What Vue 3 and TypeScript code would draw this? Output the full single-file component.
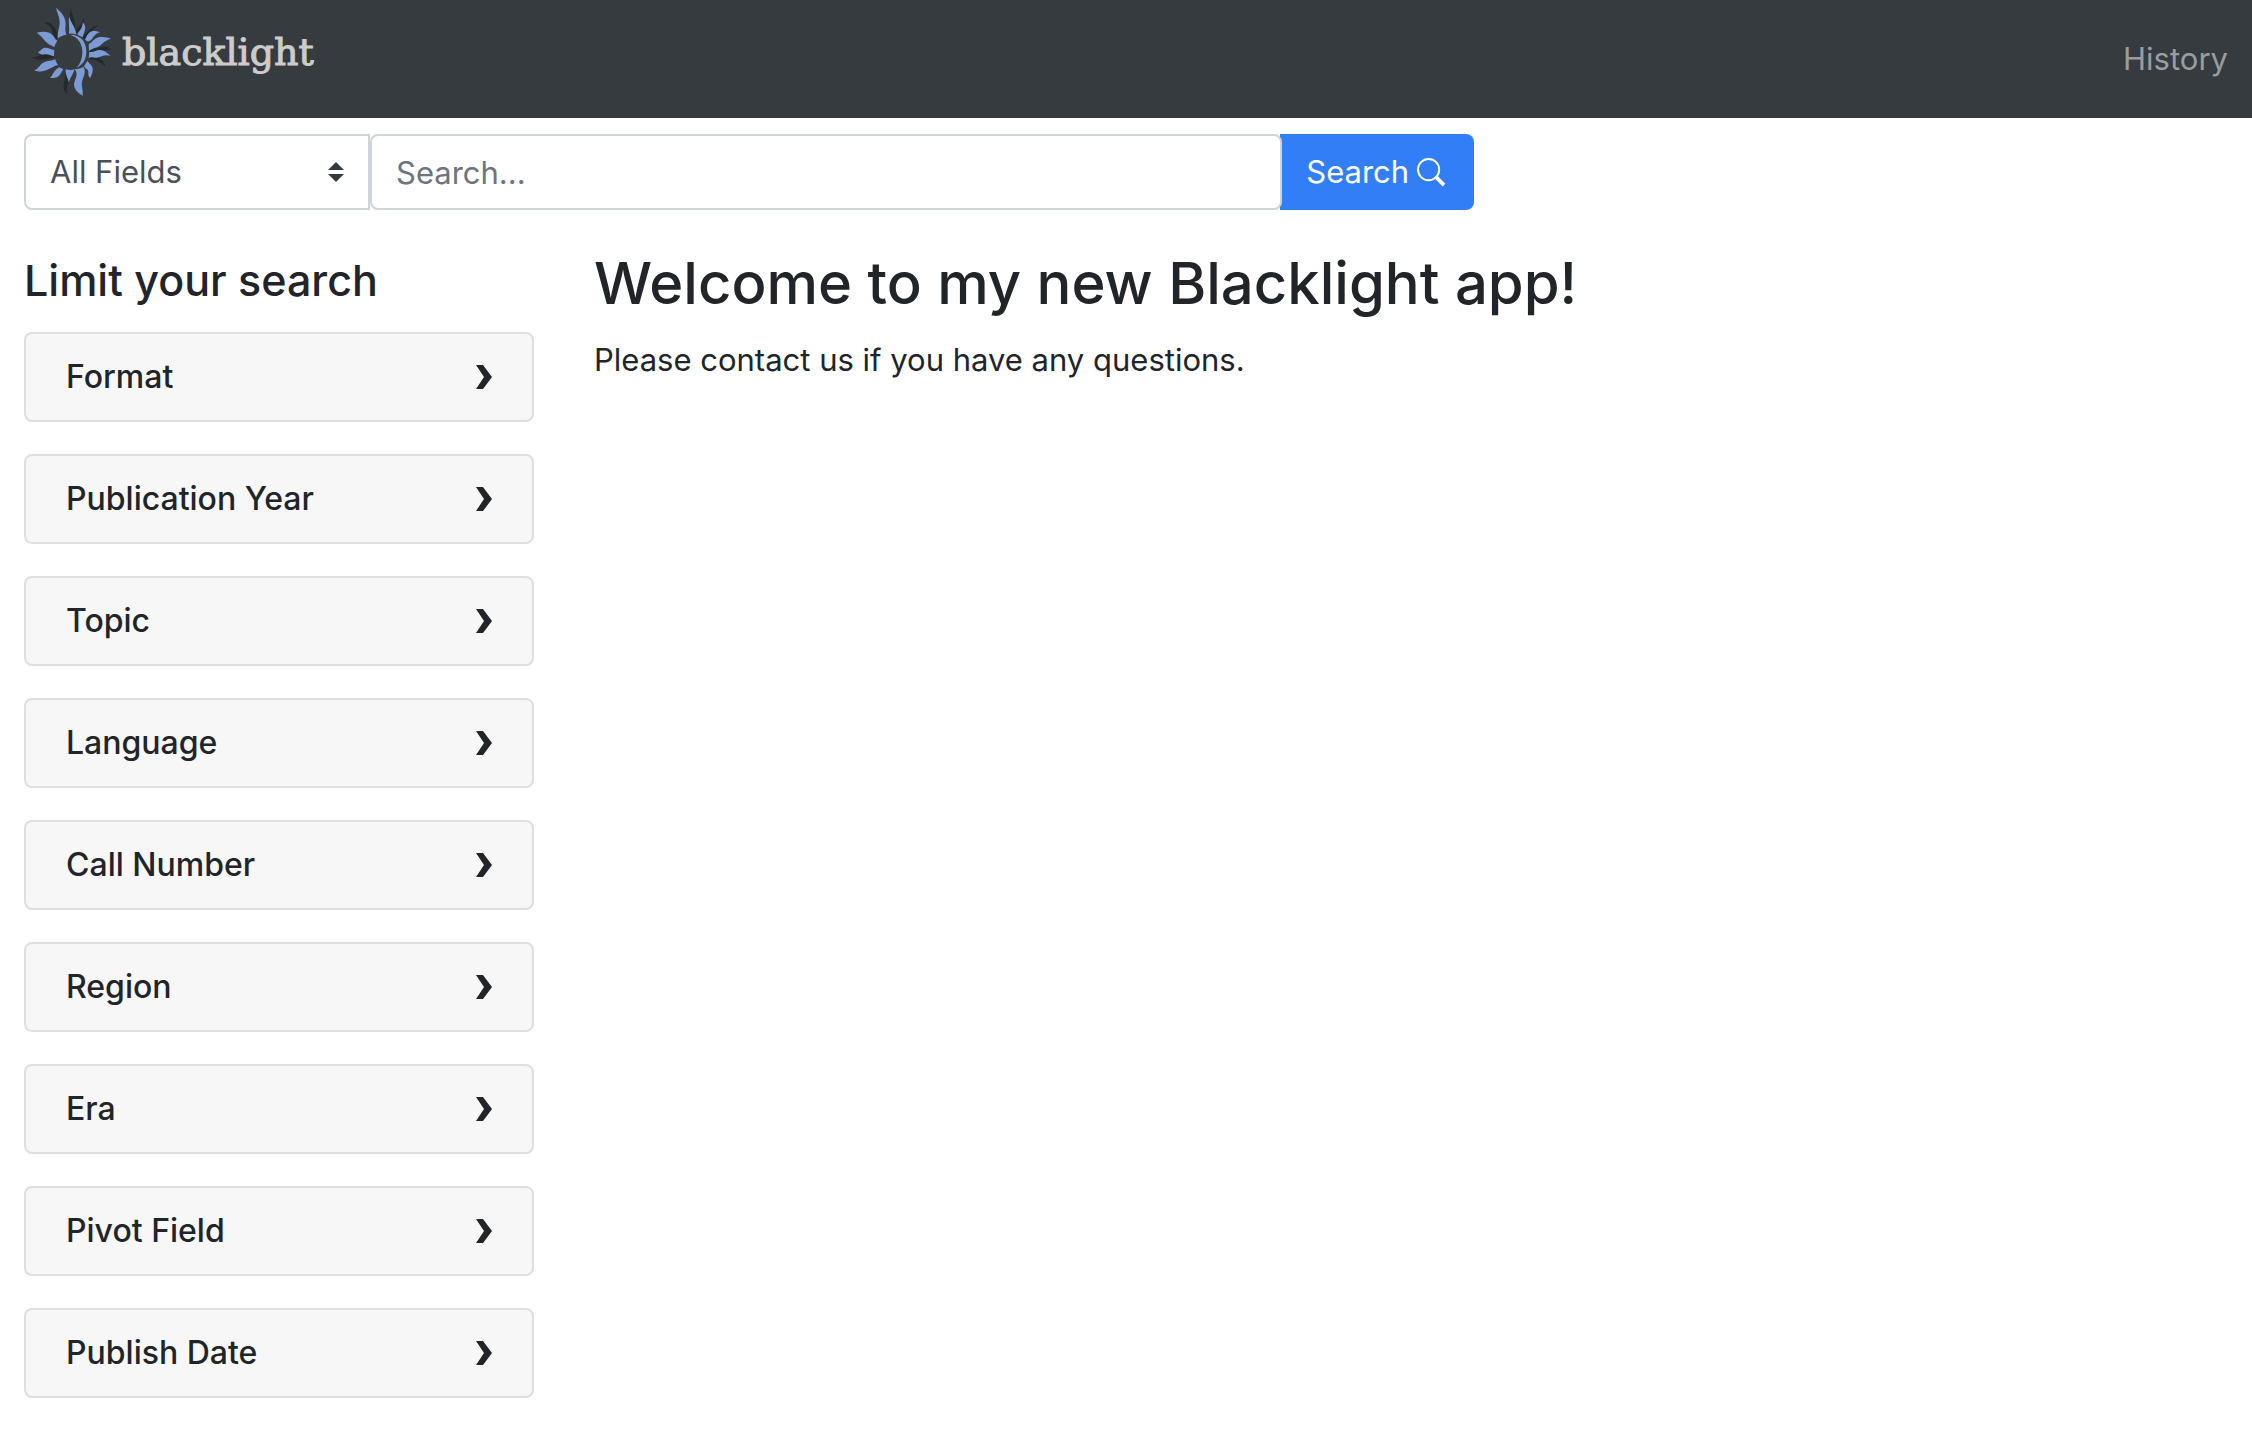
<script setup lang="ts">
import { ref } from 'vue'

const facets: string[] = [
  'Format',
  'Publication Year',
  'Topic',
  'Language',
  'Call Number',
  'Region',
  'Era',
  'Pivot Field',
  'Publish Date',
]

const query = ref('')
const field = ref('all_fields')
</script>

<template>
  <div class="page">
    <header class="navbar">
      <a class="brand" href="#" aria-label="blacklight">
        <svg class="sun" viewBox="0 0 300 330" aria-hidden="true">
          <g fill="#24292c">
            <path d="M152 15C150 40 170 58 166 96L148 80C142 55 154 40 152 15Z" />
            <path d="M190 54C196 70 176 88 178 100L164 98C170 82 186 76 190 54Z" />
            <path d="M72 68C98 62 104 86 116 104L110 118C94 100 98 76 72 68Z" />
            <path d="M236 76C212 80 204 98 186 110L198 120C210 100 216 88 236 76Z" />
            <path d="M32 170C50 178 60 158 90 164L104 172C80 178 56 186 32 170Z" />
            <path d="M276 148C256 132 240 142 208 150L210 160C236 158 250 150 276 148Z" />
            <path d="M258 199C246 178 236 168 210 166L206 178C230 176 240 190 258 199Z" />
            <path d="M142 284C120 262 138 244 134 222L152 228C152 248 134 258 142 284Z" />
            <path d="M66 186C76 200 90 190 108 184L112 194C96 200 76 210 66 186Z" />
          </g>
          <g fill="#7c9ad3">
            <path d="M108 23C132 42 140 62 136 84C135 92 138 98 139 104C130 105 121 109 114 115C110 98 120 82 119 65C118 48 112 40 108 23Z" />
            <path d="M147 49C153 70 166 80 169 103C162 101 154 100 147 101C149 84 145 68 147 49Z" />
            <path d="M188 67C204 84 190 98 189 110C184 112 178 108 172 103C177 92 188 88 188 67Z" />
            <path d="M241 97C222 100 220 118 209 123C203 126 199 124 195 118C199 113 203 97 216 94C226 92 234 95 241 97Z" />
            <path d="M273 116C250 122 246 136 231 142C221 146 214 147 207 153L206 132C216 130 220 116 236 112C250 109 262 112 273 116Z" />
            <path d="M271 167C252 162 246 170 230 173C220 174 214 168 206 175L208 156C220 158 228 150 240 150C254 151 260 158 271 167Z" />
            <path d="M210 234C200 224 210 212 200 207C196 204 194 203 192 199L202 183C207 190 216 194 218 206C219 217 215 226 210 234Z" />
            <path d="M188 287C168 276 158 262 164 244C169 230 174 220 164 208C174 207 184 204 191 201C198 216 192 228 187 241C182 258 190 266 188 287Z" />
            <path d="M147 248C144 236 136 224 137 208C146 210 154 211 163 208C160 224 150 232 147 248Z" />
            <path d="M90 234C100 226 100 210 119 202C123 205 126 206 130 207C124 216 121 226 112 231C105 235 98 234 90 234Z" />
            <path d="M43 212C56 206 60 193 72 187C84 181 95 183 106 178C107 184 110 189 114 195C102 198 98 202 88 206C72 215 60 216 43 212Z" />
            <path d="M53 155C62 156 62 145 75 143C88 142 92 150 103 149L102 168C92 168 88 163 78 163C68 163 62 165 53 155Z" />
            <path d="M50 98C62 106 68 114 76 124C84 134 93 136 103 141C105 134 108 128 112 122C104 118 101 104 88 98C76 93 62 95 50 98Z" />
            <path d="M151 104C184 104 199 128 199 154C199 178 189 195 170 203C182 190 187 174 187 156C187 134 178 114 151 104Z" />
          </g>
        </svg>
        <span class="wordmark">blacklight</span>
      </a>
      <nav><a class="nav-link" href="#">History</a></nav>
    </header>

    <form class="search" role="search" @submit.prevent>
      <div class="select-wrap">
        <select v-model="field" aria-label="Targeted search options">
          <option value="all_fields">All Fields</option>
          <option value="title">Title</option>
          <option value="author">Author</option>
          <option value="subject">Subject</option>
        </select>
        <svg class="carets" viewBox="0 0 16 20" aria-hidden="true">
          <path d="M8 0L16 8H0ZM0 12H16L8 20Z" fill="#343a40" />
        </svg>
      </div>
      <input v-model="query" type="text" placeholder="Search..." aria-label="search for" />
      <button type="submit">
        <span>Search</span>
        <svg class="glass" viewBox="0 0 30 30" fill="none" stroke="#fff" aria-hidden="true">
          <circle cx="12" cy="12" r="11" stroke-width="2" />
          <path d="M19 19L28 28" stroke-width="4" />
        </svg>
      </button>
    </form>

    <div class="columns">
      <aside>
        <h2>Limit your search</h2>
        <div class="facets">
          <button v-for="name in facets" :key="name" class="facet" type="button" aria-expanded="false">
            <span>{{ name }}</span>
            <svg class="chevron" viewBox="0 0 16 24" aria-hidden="true">
              <path d="M0 0H7L16 12L7 24H0L8 12Z" fill="#212529" />
            </svg>
          </button>
        </div>
      </aside>
      <main>
        <h1>Welcome to my new Blacklight app!</h1>
        <p>Please contact us if you have any questions.</p>
      </main>
    </div>
  </div>
</template>

<style>
body {
  margin: 0;
  background: #fff;
}
</style>

<style scoped>
.page {
  font-family: Inter, "Liberation Sans", sans-serif;
  font-size: 31px;
  line-height: 48px;
  color: #212529;
}

.page * {
  box-sizing: border-box;
}

.navbar {
  display: flex;
  align-items: center;
  justify-content: space-between;
  height: 118px;
  padding: 0 24px 0 20px;
  background: #363b3f;
}

.brand {
  display: flex;
  align-items: flex-start;
  height: 118px;
  text-decoration: none;
}

.sun {
  width: 100px;
  height: 110px;
}

.wordmark {
  padding: 28px 0 0 2px;
  font-family: "DejaVu Serif", serif;
  font-size: 38px;
  color: #ccc;
  -webkit-text-stroke: 1px #ccc;
}

.nav-link {
  color: #9a9d9f;
  text-decoration: none;
}

.search {
  display: flex;
  width: 64.4%;
  height: 76px;
  margin: 16px 24px 0;
}

.select-wrap {
  position: relative;
  flex: 0 0 346px;
}

select,
input {
  width: 100%;
  height: 76px;
  padding: 0 24px;
  border: 2px solid #ced4da;
  background: #fff;
  color: #495057;
  font: inherit;
  outline: none;
}

select {
  appearance: none;
  border-radius: 8px 0 0 8px;
}

.carets {
  position: absolute;
  top: 28px;
  right: 26px;
  width: 16px;
  height: 20px;
  pointer-events: none;
}

input {
  position: relative;
  flex: 1;
  min-width: 0;
  margin-right: -2px;
  border-radius: 8px;
}

input::placeholder {
  color: #6c757d;
  opacity: 1;
}

.search button {
  display: flex;
  align-items: center;
  justify-content: space-between;
  flex: 0 0 194px;
  padding: 0 28px 0 26px;
  border: 0;
  border-radius: 0 8px 8px 0;
  background: #327ef6;
  color: #fff;
  font: inherit;
}

.glass {
  width: 29px;
  height: 29px;
}

.columns {
  display: grid;
  grid-template-columns: 510fr 1634fr;
  column-gap: 60px;
  padding: 40px 24px 32px;
}

h1,
h2,
p {
  margin: 0;
  font-weight: 500;
}

h2 {
  margin-bottom: 22px;
  font-size: 43px;
  line-height: 60px;
}

h1 {
  margin-bottom: 20px;
  font-size: 58px;
  line-height: 66px;
}

p {
  font-weight: 400;
}

.facets {
  display: flex;
  flex-direction: column;
  gap: 32px;
}

.facet {
  display: flex;
  align-items: center;
  justify-content: space-between;
  height: 90px;
  padding: 0 40px;
  border: 2px solid #dfdfdf;
  border-radius: 8px;
  background: #f7f7f7;
  color: #212529;
  font: inherit;
  font-size: 32px;
  font-weight: 500;
}

.chevron {
  width: 16px;
  height: 24px;
}
</style>
